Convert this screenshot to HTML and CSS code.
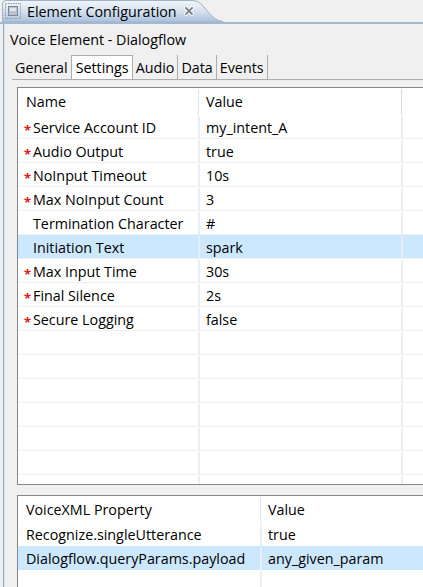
FILE: index.html
```html
<!DOCTYPE html>
<html>
<head>
<meta charset="utf-8">
<link rel="stylesheet" href="styles.css">
</head>
<body>
<div class="titlebar">
  <div class="viewtab">
    <svg class="tabshape" width="222" height="22" viewBox="0 0 222 22">
      <defs>
        <linearGradient id="tg" x1="0" y1="0" x2="0" y2="1">
          <stop offset="0" stop-color="#f3f6fa"/>
          <stop offset="0.5" stop-color="#d5e1ef"/>
          <stop offset="1" stop-color="#a9c1dd"/>
        </linearGradient>
      </defs>
      <path d="M0.5,22 L0.5,4 Q0.5,0.5 4,0.5 L191,0.5 C203,0.5 207,21 221,21.5 L221,22 Z" fill="url(#tg)" stroke="#9fb2c8" stroke-width="1"/>
    </svg>
    <svg class="viewicon" width="16" height="16" viewBox="0 0 16 16">
      <rect x="0.5" y="0.5" width="15" height="15" fill="none" stroke="#9a9a9a" stroke-dasharray="1.5 1"/>
      <rect x="3.5" y="3.5" width="9" height="9" fill="#b9c3cf" stroke="#7d8896"/>
      <rect x="5" y="5" width="6" height="3" fill="#dfe5ec"/>
    </svg>
    <span class="viewtitle">Element Configuration</span>
    <svg class="close" width="10" height="10" viewBox="0 0 10 10">
      <path d="M2,2 L8,8 M8,2 L2,8" stroke="#ffffff" stroke-width="3.6" stroke-linecap="square"/>
      <path d="M2,2 L8,8 M8,2 L2,8" stroke="#7b7f86" stroke-width="1.8" stroke-linecap="square"/>
    </svg>
  </div>
</div>
<div class="content">
  <div class="heading">Voice Element - Dialogflow</div>
  <div class="tabs">
    <div class="tab">General</div>
    <div class="tab selected">Settings</div>
    <div class="tab">Audio</div>
    <div class="tab">Data</div>
    <div class="tab">Events</div>
  </div>
  <div class="panel">
    <div class="grid settings">
      <div class="row head">
        <div class="cell c1">Name</div>
        <div class="cell c2">Value</div>
        <div class="cell c3"></div>
      </div>
      <div class="row"><div class="cell c1"><span class="req">*</span>Service Account ID</div><div class="cell c2">my_intent_A</div><div class="cell c3"></div></div>
      <div class="row"><div class="cell c1"><span class="req">*</span>Audio Output</div><div class="cell c2">true</div><div class="cell c3"></div></div>
      <div class="row"><div class="cell c1"><span class="req">*</span>NoInput Timeout</div><div class="cell c2">10s</div><div class="cell c3"></div></div>
      <div class="row"><div class="cell c1"><span class="req">*</span>Max NoInput Count</div><div class="cell c2">3</div><div class="cell c3"></div></div>
      <div class="row"><div class="cell c1"><span class="req"></span>Termination Character</div><div class="cell c2">#</div><div class="cell c3"></div></div>
      <div class="row sel"><div class="cell c1"><span class="req"></span>Initiation Text</div><div class="cell c2">spark</div><div class="cell c3"></div></div>
      <div class="row"><div class="cell c1"><span class="req">*</span>Max Input Time</div><div class="cell c2">30s</div><div class="cell c3"></div></div>
      <div class="row"><div class="cell c1"><span class="req">*</span>Final Silence</div><div class="cell c2">2s</div><div class="cell c3"></div></div>
      <div class="row"><div class="cell c1"><span class="req">*</span>Secure Logging</div><div class="cell c2">false</div><div class="cell c3"></div></div>
      <div class="row"><div class="cell c1"></div><div class="cell c2"></div><div class="cell c3"></div></div>
      <div class="row"><div class="cell c1"></div><div class="cell c2"></div><div class="cell c3"></div></div>
      <div class="row"><div class="cell c1"></div><div class="cell c2"></div><div class="cell c3"></div></div>
      <div class="row"><div class="cell c1"></div><div class="cell c2"></div><div class="cell c3"></div></div>
      <div class="row"><div class="cell c1"></div><div class="cell c2"></div><div class="cell c3"></div></div>
      <div class="row"><div class="cell c1"></div><div class="cell c2"></div><div class="cell c3"></div></div>
      <div class="row"><div class="cell c1"></div><div class="cell c2"></div><div class="cell c3"></div></div>
    </div>
    <div class="grid vxml">
      <div class="row head">
        <div class="cell c1">VoiceXML Property</div>
        <div class="cell c2">Value</div>
      </div>
      <div class="row"><div class="cell c1">Recognize.singleUtterance</div><div class="cell c2">true</div></div>
      <div class="row sel"><div class="cell c1">Dialogflow.queryParams.payload</div><div class="cell c2">any_given_param</div></div>
      <div class="row"><div class="cell c1"></div><div class="cell c2"></div></div>
    </div>
  </div>
</div>
</body>
</html>
```

FILE: styles.css
```css
html, body {
  margin: 0;
  padding: 0;
}
body {
  width: 423px;
  height: 587px;
  overflow: hidden;
  background: #f0f0f0;
  font-family: "Open Sans", "Noto Sans", sans-serif;
  font-size: 14.3px;
  color: #000;
}
.titlebar {
  height: 22px;
  border-bottom: 2px solid #a5b7cd;
  padding-left: 2px;
  display: flex;
  align-items: flex-end;
}
.viewtab {
  position: relative;
  width: 222px;
  height: 22px;
  display: flex;
  align-items: center;
  padding-left: 3px;
  box-sizing: border-box;
}
.tabshape {
  position: absolute;
  left: 0;
  top: 0;
}
.viewicon, .viewtitle, .close {
  position: relative;
}
.viewtitle {
  margin-left: 6px;
  line-height: 21px;
  white-space: nowrap;
}
.close {
  margin-left: 7px;
}
.content {
  margin-left: 3px;
  border-left: 1px solid #98a9bf;
  box-shadow: inset 1px 0 #dbe6f2;
  height: 563px;
  overflow: hidden;
}
.heading {
  padding: 6px 0 5px 6px;
  line-height: 20px;
  white-space: nowrap;
}
.tabs {
  display: flex;
  margin-left: 8px;
  height: 24px;
  border-bottom: 1px solid #adadad;
}
.tab {
  padding: 2px 3px 0 3px;
  line-height: 22px;
  border-right: 1px solid #adadad;
  white-space: nowrap;
}
.tab.selected {
  background: #fff;
  border: 1px solid #adadad;
  border-bottom: none;
  margin-left: -1px;
  padding-top: 1px;
  padding-left: 4px;
}
.panel {
  margin-left: 8px;
  padding: 7px 0 0 5px;
  display: flex;
  flex-direction: column;
  gap: 10px;
}
.grid {
  background: #fff;
  border: 1px solid #828790;
  border-right: none;
  overflow: hidden;
  box-sizing: border-box;
  flex-shrink: 0;
}
.settings {
  height: 398px;
}
.vxml {
  height: 100px;
}
.row {
  display: flex;
  height: 24px;
  box-sizing: border-box;
  padding-top: 1px;
  line-height: 23px;
  white-space: nowrap;
}
.settings .row {
  border-bottom: 1px solid #f0f0f0;
}
.settings .row.head {
  height: 27px;
  line-height: 26px;
  border-bottom: none;
}
.vxml .row.head {
  height: 26px;
  line-height: 26px;
}
.cell {
  box-sizing: border-box;
  overflow: hidden;
}
.settings .c1 {
  width: 182px;
  padding-left: 6px;
  border-right: 2px solid #e8eef5;
}
.settings .c2 {
  width: 203px;
  padding-left: 6px;
  border-right: 2px solid #e8eef5;
}
.settings .c3 {
  flex: 1;
}
.settings .head .c1 {
  padding-left: 8px;
  border-right: 1px solid #e3e3e3;
  width: 181px;
  margin-right: 1px;
}
.settings .head .c2 {
  border-right: 1px solid #dadada;
  width: 202px;
  margin-right: 1px;
  padding-left: 6px;
}
.req {
  display: inline-block;
  width: 9px;
  color: #e3161e;
  font-size: 13px;
  font-weight: bold;
  position: relative;
  top: 2px;
  vertical-align: baseline;
}
.sel {
  background: #cce8ff;
}
.vxml .c1 {
  width: 244px;
  padding-left: 8px;
  border-right: 2px solid #eaf0f7;
}
.vxml .c2 {
  flex: 1;
  padding-left: 6px;
}
.vxml .head .c1 {
  border-right: 1px solid #e3e3e3;
  width: 243px;
  margin-right: 1px;
}
```
